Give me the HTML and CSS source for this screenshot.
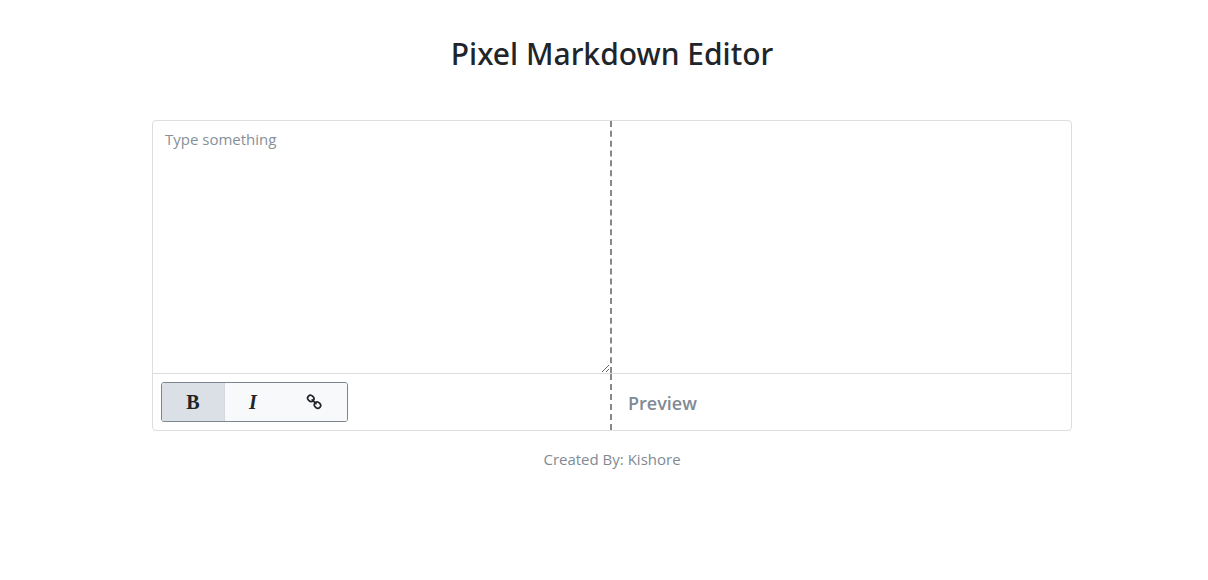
FILE: index.html
```html
<!DOCTYPE html>
<html lang="en">
<head>
<meta charset="utf-8">
<meta name="viewport" content="width=device-width, initial-scale=1">
<title>Pixel Markdown Editor</title>
<link rel="stylesheet" href="styles.css">
</head>
<body>
<main class="page">
  <h1 class="title">Pixel Markdown Editor</h1>
  <section class="card">
    <div class="row">
      <textarea class="editor" placeholder="Type something" aria-label="Markdown"></textarea>
      <div class="output"></div>
    </div>
    <div class="row row-footer">
      <div class="tools">
        <div class="button-group" role="group" aria-label="Formatting">
          <button class="tool tool-bold active" type="button">B</button>
          <button class="tool tool-italic" type="button">I</button>
          <button class="tool tool-link" type="button" aria-label="Link">
            <svg class="icon" viewBox="0 0 16 16" aria-hidden="true">
              <ellipse cx="4.8" cy="4.4" rx="3.3" ry="2.9" transform="rotate(45 4.8 4.4)"/>
              <ellipse cx="11.5" cy="11.1" rx="3.3" ry="2.9" transform="rotate(45 11.5 11.1)"/>
              <path d="M6.2 5.8L10 9.6"/>
            </svg>
          </button>
        </div>
      </div>
      <h2 class="preview">Preview</h2>
    </div>
  </section>
  <p class="credit">Created By: Kishore</p>
</main>
</body>
</html>
```
FILE: styles.css
```css
* {
  box-sizing: border-box;
}

body {
  margin: 0;
  padding: 34px 16px 16px 32px;
  background: #fff;
  color: #212529;
  font: 15px/24px "Segoe UI", "Open Sans", "Noto Sans", sans-serif;
}

.page {
  max-width: 920px;
  margin: 0 auto;
}

.title {
  margin: 0 0 46px;
  font-family: "Segoe UI", "Noto Sans", sans-serif;
  font-size: 30px;
  line-height: 40px;
  font-weight: 500;
  text-align: center;
}

.card {
  border: 1px solid #dedede;
  border-radius: 4px;
}

.row {
  display: grid;
  grid-template-columns: 1fr 1fr;
}

.row-footer {
  border-top: 1px solid #dedede;
}

.editor {
  display: block;
  width: 100%;
  height: 252px;
  padding: 6px 12px;
  border: 0;
  border-right: 2px dashed #888;
  background: transparent;
  color: inherit;
  font: inherit;
  resize: vertical;
  outline: 0;
}

.editor::placeholder {
  color: #869099;
  opacity: 1;
}

.tools {
  padding: 8px;
  border-right: 2px dashed #888;
}

.button-group {
  display: inline-flex;
  vertical-align: top;
  height: 40px;
  border: 1px solid #7b858f;
  border-radius: 3px;
  overflow: hidden;
}

.tool {
  padding: 0;
  border: 0;
  background: #f8f9fa;
  color: #212529;
  font: 20px/24px "Liberation Serif", serif;
}

.tool-bold {
  width: 63px;
  font-weight: bold;
}

.tool-italic {
  width: 56px;
  font-weight: bold;
  font-style: italic;
}

.tool-link {
  display: grid;
  width: 66px;
  place-items: center;
}

.active {
  background: #dae0e5;
  border-right: 1px solid #d3d9df;
}

.icon {
  width: 16px;
  height: 16px;
  fill: none;
  stroke: #212529;
  stroke-width: 1.7;
  stroke-linecap: round;
}

.preview {
  align-self: center;
  margin: 0;
  padding: 2px 16px 0;
  color: #7f8a94;
  font-size: 18px;
  line-height: 24px;
  font-weight: 600;
}

.credit {
  margin: 16px 0 0;
  color: #7f8a94;
  text-align: center;
}
```
